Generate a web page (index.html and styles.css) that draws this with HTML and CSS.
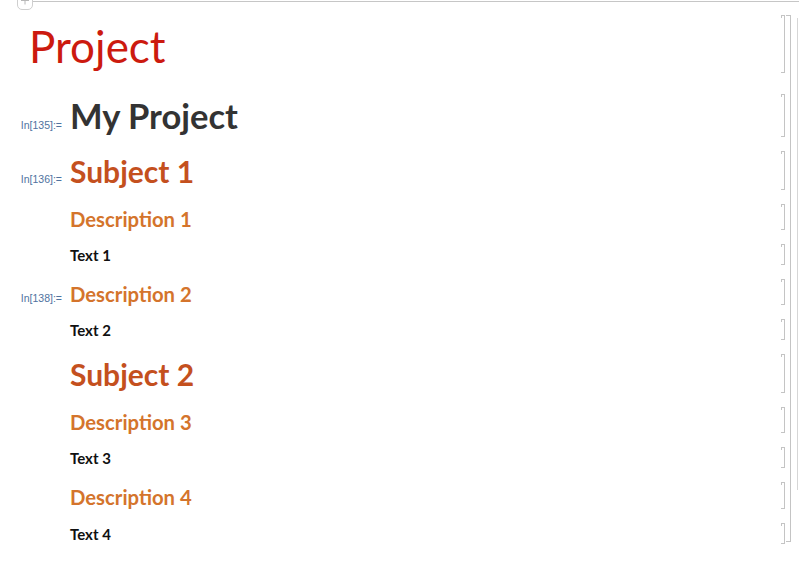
FILE: index.html
```html
<!DOCTYPE html>
<html>
<head>
<meta charset="utf-8">
<link rel="stylesheet" href="styles.css">
</head>
<body>
<div class="topbar">
  <div class="plus"><svg width="14" height="16" viewBox="0 0 14 16"><path d="M7 3.5V11.5M3 7.5H11" stroke="#b8b8b8" stroke-width="1" fill="none"/></svg></div>
  <div class="topline"></div>
</div>
<div class="notebook">
  <div class="cells">
    <div class="cell c-title"><div class="body"><div class="content title">Project</div></div><div class="bracket"></div></div>
    <div class="cell c-chapter"><div class="body"><div class="label">In[135]:=</div><div class="content chapter">My Project</div></div><div class="bracket"></div></div>
    <div class="cell c-section"><div class="body"><div class="label">In[136]:=</div><div class="content section">Subject 1</div></div><div class="bracket"></div></div>
    <div class="cell c-sub"><div class="body"><div class="label"></div><div class="content sub">Description 1</div></div><div class="bracket"></div></div>
    <div class="cell c-text"><div class="body"><div class="label"></div><div class="content text">Text 1</div></div><div class="bracket"></div></div>
    <div class="cell c-sub"><div class="body"><div class="label">In[138]:=</div><div class="content sub">Description 2</div></div><div class="bracket"></div></div>
    <div class="cell c-text"><div class="body"><div class="label"></div><div class="content text">Text 2</div></div><div class="bracket"></div></div>
    <div class="cell c-section"><div class="body"><div class="label"></div><div class="content section">Subject 2</div></div><div class="bracket"></div></div>
    <div class="cell c-sub"><div class="body"><div class="label"></div><div class="content sub">Description 3</div></div><div class="bracket"></div></div>
    <div class="cell c-text"><div class="body"><div class="label"></div><div class="content text">Text 3</div></div><div class="bracket"></div></div>
    <div class="cell c-sub"><div class="body"><div class="label"></div><div class="content sub">Description 4</div></div><div class="bracket"></div></div>
    <div class="cell c-text"><div class="body"><div class="label"></div><div class="content text">Text 4</div></div><div class="bracket"></div></div>
  </div>
  <div class="group"></div>
  <div class="scroll"></div>
</div>
</body>
</html>
```
FILE: styles.css
```css
html, body {
  margin: 0;
  padding: 0;
  background: #ffffff;
}
body {
  width: 799px;
  height: 563px;
  overflow: hidden;
  font-family: Lato, "Open Sans", sans-serif;
}
.topbar {
  display: flex;
  align-items: flex-start;
  height: 15px;
  padding-left: 17px;
}
.plus {
  width: 16px;
  height: 18px;
  margin-top: -8px;
  border: 1px solid #cfcfcf;
  border-radius: 5px;
  box-sizing: border-box;
  background: #fff;
  display: flex;
  justify-content: center;
  align-items: flex-end;
}
.plus svg {
  display: block;
}
.topline {
  flex: 1;
  margin-top: 1px;
  border-top: 1px solid #c6c6c6;
}
.notebook {
  display: flex;
  align-items: flex-start;
}
.cells {
  width: 785px;
  display: flex;
  flex-direction: column;
}
.cell {
  display: flex;
  align-items: stretch;
}
.body {
  flex: 1;
  display: flex;
  align-items: baseline;
}
.label {
  width: 70px;
  flex: none;
  text-align: right;
  padding-right: 8px;
  box-sizing: border-box;
  font-family: "Liberation Sans", Arial, sans-serif;
  font-size: 10.5px;
  line-height: 1;
  color: #4f73a0;
}
.content {
  line-height: 1;
  white-space: nowrap;
}
.bracket {
  width: 3px;
  flex: none;
  border: 1px solid #c4c4c4;
  border-left: none;
  position: relative;
}
.bracket::before {
  content: "";
  position: absolute;
  left: 0;
  top: 0;
  width: 1px;
  height: 2px;
  background: #c4c4c4;
}
.title {
  padding-left: 29px;
  font-size: 44px;
  font-weight: 400;
  color: #cc1a0f;
  padding-top: 9px;
  padding-bottom: 5px;
}
.c-chapter { margin-top: 21px; }
.chapter {
  font-size: 34.5px;
  font-weight: 700;
  color: #333333;
  padding-top: 5px;
  padding-bottom: 3px;
}
.c-section { margin-top: 14px; }
.section {
  font-size: 30px;
  font-weight: 700;
  color: #c4501e;
  padding-top: 5px;
  padding-bottom: 4px;
}
.c-sub { margin-top: 14px; }
.sub {
  font-size: 20.3px;
  font-weight: 700;
  color: #d4742c;
  padding-top: 5px;
  padding-bottom: 1px;
}
.c-text { margin-top: 14px; }
.text {
  font-size: 15px;
  font-weight: 700;
  color: #111111;
  padding-top: 4px;
  padding-bottom: 2px;
}
.group {
  width: 4px;
  height: 525px;
  margin-left: 1px;
  border: 1px solid #c4c4c4;
  border-left: none;
}
.scroll {
  width: 1px;
  height: 472px;
  margin-left: 6px;
  margin-top: 3px;
  background: #d6d6d6;
}
```
